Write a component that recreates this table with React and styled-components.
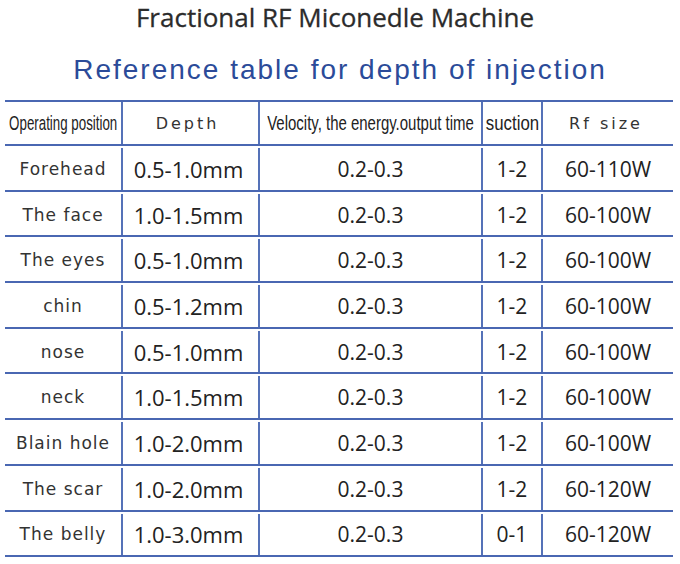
import React from 'react'
import styled, { createGlobalStyle } from 'styled-components'

const GlobalStyle = createGlobalStyle`
    html, body {
        margin: 0;
        padding: 0;
        background: #fff;
    }
`

const rows = [
    ['Forehead', '0.5-1.0mm', '0.2-0.3', '1-2', '60-110W'],
    ['The face', '1.0-1.5mm', '0.2-0.3', '1-2', '60-100W'],
    ['The eyes', '0.5-1.0mm', '0.2-0.3', '1-2', '60-100W'],
    ['chin', '0.5-1.2mm', '0.2-0.3', '1-2', '60-100W'],
    ['nose', '0.5-1.0mm', '0.2-0.3', '1-2', '60-100W'],
    ['neck', '1.0-1.5mm', '0.2-0.3', '1-2', '60-100W'],
    ['Blain hole', '1.0-2.0mm', '0.2-0.3', '1-2', '60-100W'],
    ['The scar', '1.0-2.0mm', '0.2-0.3', '1-2', '60-120W'],
    ['The belly', '1.0-3.0mm', '0.2-0.3', '0-1', '60-120W'],
]

const App = () => (
    <Page>
        <GlobalStyle />
        <Title>Fractional RF Miconedle Machine</Title>
        <Subtitle>Reference table for depth of injection</Subtitle>
        <Table>
            <HeadRow>
                <Cell><Narrow scale={0.65}>Operating position</Narrow></Cell>
                <Cell><Spaced shift={6}>Depth</Spaced></Cell>
                <Cell><Narrow scale={0.73}>Velocity, the energy.output time</Narrow></Cell>
                <Cell><Narrow scale={0.82}>suction</Narrow></Cell>
                <Cell><Spaced shift={4}>Rf size</Spaced></Cell>
            </HeadRow>
            {rows.map(([pos, depth, vel, suction, rf]) => (
                <Row key={pos}>
                    <Cell><Position>{pos}</Position></Cell>
                    <Cell><Depth>{depth}</Depth></Cell>
                    <Cell><Value>{vel}</Value></Cell>
                    <Cell><Value>{suction}</Value></Cell>
                    <Cell><Value>{rf}</Value></Cell>
                </Row>
            ))}
        </Table>
    </Page>
)

const Page = styled.div`
    width: 680px;
    height: 564px;
    overflow: hidden;
    display: flex;
    flex-direction: column;
    align-items: stretch;
`

const Title = styled.h1`
    margin: 0;
    padding-right: 10px;
    height: 34px;
    line-height: 34px;
    text-align: center;
    font-family: "Open Sans", sans-serif;
    font-weight: 500;
    font-size: 26px;
    color: #2b2b2b;
    -webkit-text-stroke: 0.3px #2b2b2b;
`

const Subtitle = styled.h2`
    margin: 16px 0 0;
    height: 40px;
    line-height: 40px;
    text-align: center;
    font-family: "Liberation Sans", sans-serif;
    font-weight: 400;
    font-size: 28px;
    letter-spacing: 2px;
    color: #2b4b99;
`

const Table = styled.div`
    margin: 10px 0 0 5px;
    width: 668px;
    display: flex;
    flex-direction: column;
    border-top: 2px solid #4a67b2;
`

const Row = styled.div`
    display: grid;
    grid-template-columns: 116px 137px 223px 60px 132px;
    height: 45.7px;
    box-sizing: border-box;
    border-bottom: 2px solid #4a67b2;
    padding-top: 2px;
`

const HeadRow = styled(Row)`
    height: 44px;
    padding-top: 0;
`

const Cell = styled.div`
    display: flex;
    align-items: center;
    justify-content: center;
    overflow: visible;
    white-space: nowrap;
    color: #2a2a2a;

    & + & {
        border-left: 2px solid #5572b8;
    }
`

const Narrow = styled.span`
    display: inline-block;
    font-family: "Liberation Sans", sans-serif;
    font-size: 20.5px;
    transform: scaleX(${props => props.scale});
    color: #222;
`

const Spaced = styled.span`
    font-family: "DejaVu Sans", sans-serif;
    font-size: 16px;
    letter-spacing: 3px;
    color: #333;
    margin-right: ${props => props.shift}px;
`

const Position = styled.span`
    font-family: "DejaVu Sans", sans-serif;
    font-size: 17px;
    letter-spacing: 1px;
    color: #333;
`

const Depth = styled.span`
    font-family: "Open Sans", sans-serif;
    font-size: 22px;
    color: #222;
    margin-right: 4px;
`

const Value = styled.span`
    font-family: "Open Sans", sans-serif;
    font-size: 21px;
    color: #222;
`

export default App
